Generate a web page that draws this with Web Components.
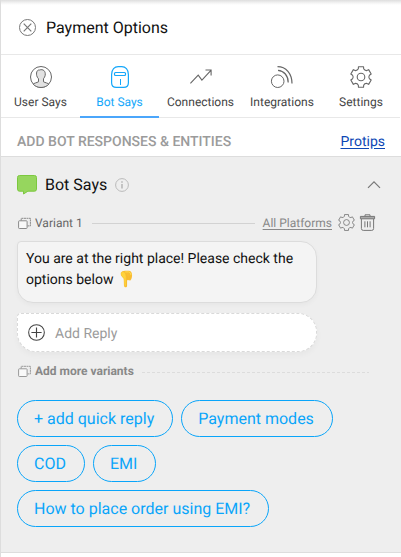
<!DOCTYPE html>
<html lang="en">
<head>
<meta charset="utf-8">
<title>Payment Options</title>
<style>
html,body{margin:0;height:100%;background:#fff}
body{font-family:Roboto,"Liberation Sans",sans-serif;overflow:hidden;text-rendering:geometricPrecision}
</style>
</head>
<body>
<bot-editor></bot-editor>
<script>
// Six-toothed gear outline centred in a 22-unit box.
const gear = () => {
  const at = (deg, r) => { const a = deg * Math.PI / 180; return (11 + r * Math.cos(a)).toFixed(2) + ' ' + (11 + r * Math.sin(a)).toFixed(2); };
  let d = '';
  for (let k = 0; k < 6; k++) {
    const m = -90 + 60 * k;
    d += (k ? 'L' : 'M') + at(m - 14, 10.6) + 'L' + at(m + 14, 10.6) + 'L' + at(m + 18, 8.6) + 'Q' + at(m + 30, 7.2) + ' ' + at(m + 42, 8.6);
  }
  return d + 'z';
};
const icons = {
  close: [17, '<circle cx="8.5" cy="8.5" r="8"/><path d="M4.7 4.7l7.6 7.6M12.3 4.7l-7.6 7.6" stroke-width="1.2"/>'],
  user: [22, '<circle cx="11" cy="11" r="10.5"/><path fill="#e2e2e2" d="M3.2 18.2c.6-1 3.6-1.5 5.3-2.4v-3c-1-1-1.5-2-1.8-3.3C6 5.800 7.500 3.600 9.600 4c3.300-1.200 6.200.8 5.600 5.300-.3 1.300-.8 2.500-1.700 3.400v3.100c1.700.9 4.700 1.400 5.300 2.400-3.900 4.300-11.600 4.400-15.600 0z"/>'],
  bot: [22, '<path d="M2.600 8.500C2.600 3.500 5.600.6 9.200.6h3.600c3.600 0 6.600 2.900 6.600 7.900v8.200c0 3-1.600 4.700-4.700 4.700H7.300c-3.100 0-4.700-1.700-4.700-4.700z" stroke-width="1.200"/><rect x="5.500" y="6.500" width="11" height="3" rx="1" stroke-width="1.200"/><path d="M11.500 13v6"/>'],
  connections: [22, '<path d="M.4 17.300l7.800-8.200 3.700 5L20.700 4.600M15.500 4h5.600v5.600" stroke-width="1.100"/>'],
  integrations: [22, '<circle cx="6.700" cy="15.200" r="6.300"/><path d="M6.500.6C15 .6 21 7.500 21 17.500M7 4.300C13 4.700 17.200 9.700 17.200 16.500" stroke-width="1.200"/>'],
  settings: [22, `<path d="${gear()}" stroke-linejoin="round" stroke-width="1.100"/><circle cx="11" cy="11" r="3.800" stroke-width="1.100"/>`],
  chat: [20, '<path d="M2.500.5h15a2 2 0 0 1 2 2v11.700a2 2 0 0 1-2 2h-6.600L6.500 19v-2.800h-4a2 2 0 0 1-2-2V2.500a2 2 0 0 1 2-2z" fill="#96d65e" stroke="#7cc83f"/>'],
  info: [14, '<circle cx="7" cy="7" r="6.400"/><path d="M7 6v4.600M7 3.200v1.500" stroke-width="1.700"/>'],
  up: [14, '<path d="M1 9.800l6-6 6 6" stroke-width="1.200"/>'],
  copy: [13, '<rect x=".6" y="3.800" width="8.500" height="7.700" rx=".7" fill="#f9f9f9"/><path d="M3.200 3.500V1.300h9.200v7.600H9.500" stroke-dasharray="2 .5"/>'],
  trash: [17, '<path fill="#aaa" d="M1.400 2.400h14.200v2.400H1.400z"/><path d="M6 2.200V.8h5v1.400M2.400 5v9.500q0 1.900 1.900 1.900h8.400q1.900 0 1.900-1.900V5"/><path d="M5.900 7.300v6M8.500 7.300v6M11.100 7.300v6"/>'],
  plus: [18, '<circle cx="9" cy="9" r="8.300" stroke-width="1.100"/><path d="M9 3.600v10.800M3.600 9h10.800" stroke-width="1.200"/>'],
  hand: [18, '<path stroke="none" fill="#f9bd33" d="M3.500 3.200C4 1.400 5.500.7 7.500.7h3.700c2.600 0 3.700 2.100 3.700 4.700 0 2.200-.5 4.800-1.600 5.400-.8.400-1.500.2-1.800-.3-.4.6-1.300.6-1.900.1v6.100c0 2.200-3 2.200-3.100 0L6.300 9 4.300 6.800c-.8-.9-1.200-2-.8-3.600z"/><path fill="#ffd33d" stroke="#f5b52e" stroke-width=".4" d="M3.300 2.700c.9-1 2.600-1.100 3.600-.3 1 1 1.700 3.500 1.700 5v8.700c0 1.600-1.800 1.600-1.900 0L6.200 9.200 4 6.400C3.200 5.300 2.900 3.700 3.300 2.700zM10.200 6.700v3.200M12.600 6.300v3.600"/><path stroke="#ffdc52" stroke-width="1" d="M7.600 2h3.800q2 .5 2.300 3.300"/>']
};
const define = (name, html, setup) => customElements.define(name, class extends HTMLElement {
  constructor() {
    super();
    const t = document.createElement('template');
    t.innerHTML = html;
    this.attachShadow({mode:'open'}).append(t.content.cloneNode(true));
  }
  connectedCallback() { if (setup) setup(this); }
});

define('ui-icon', '<style>:host{display:block;flex:none;color:#666}svg{display:block;overflow:visible}</style><div></div>', el => {
  const icon = icons[el.getAttribute('name')];
  if (!icon) return;
  const [box, art] = icon;
  const size = el.getAttribute('size') || box;
  el.shadowRoot.querySelector('div').innerHTML = `<svg width="${size}" height="${size}" viewBox="0 0 ${box} ${box}" fill="none" stroke="currentColor">${art}</svg>`;
});

define('nav-tab', `<style>
:host{display:flex;box-sizing:border-box;height:63px;flex-direction:column;align-items:center;padding-top:11px;font-size:12px;line-height:14px;color:#444;border-bottom:1px solid #e8e8e8;white-space:nowrap}
span{margin-top:7px}
ui-icon{color:#666}
:host([active]){color:#15a7fa;border-bottom:2px solid #4ba6fb}
:host([active]) ui-icon{color:#15a7fa}
</style><div></div><span><slot></slot></span>`, el => {
  el.shadowRoot.querySelector('div').innerHTML = `<ui-icon name="${el.getAttribute('icon')}"></ui-icon>`;
});

define('panel-header', `<style>
:host{display:flex;box-sizing:border-box;height:55px;align-items:center;padding-left:18px;gap:10px;font-size:16px;color:#111;border-bottom:1px solid #e8e8e8;background:linear-gradient(#dedede,#f4f4f4 3px,#fff 5px)}
ui-icon{color:#777}
</style><ui-icon name="close"></ui-icon><slot></slot>`);

define('section-bar', `<style>
:host{display:flex;box-sizing:border-box;height:39px;align-items:center;justify-content:space-between;padding:9px 16px 0 16px;border-bottom:1px solid #ddd;font-size:14px;font-weight:500;color:#9b9b9b}
a{color:#0d47b5;font-weight:400;text-decoration:underline;text-underline-offset:2px}
</style><span><slot></slot></span><a>Protips</a>`);

define('variant-row', `<style>
:host{display:flex;align-items:center;height:20px;font-size:12px;color:#666}
ui-icon[name=copy]{color:#8a8a8a;margin:0 4px 0 1px}
i{flex:1;border-top:1px solid #d2d2d2;margin:1px 8px 0 9px}
a{color:#888;text-decoration:underline;text-underline-offset:2px;margin-right:6px}
ui-icon{color:#777}
ui-icon[name=settings],ui-icon[name=trash]{margin-bottom:1px}
ui-icon[name=trash]{margin-left:4px}
</style><ui-icon name="copy"></ui-icon><slot></slot><i></i><a>All Platforms</a><ui-icon name="settings" size="17"></ui-icon><ui-icon name="trash"></ui-icon>`);

define('more-variants', `<style>
:host{display:flex;align-items:center;height:16px;font-size:12px;font-weight:700;color:#888}
ui-icon{color:#999;margin:0 4px 0 1px}
i{flex:1;height:1px;margin:2px 0 0 8px;background:repeating-linear-gradient(90deg,#dcdcdc 0 3px,transparent 3px 5px)}
</style><ui-icon name="copy"></ui-icon><slot></slot><i></i>`);

define('reply-bubble', `<style>
:host{display:block;box-sizing:border-box;width:300px;height:62px;padding:7px 8px 5px;border:1px solid #dcdcdc;border-radius:4px 16px 16px 16px;background:#f4f4f4;box-shadow:0 2px 5px rgba(0,0,0,.035);font-size:14px;line-height:21px;color:#111}
</style><slot></slot>`);

define('reply-input', `<style>
:host{display:flex;box-sizing:border-box;width:300px;height:39px;align-items:center;padding-left:10px;gap:10px;border:1px dashed #d9d9d9;border-radius:4px 19px 19px 19px;background:#fff;box-shadow:0 3px 6px rgba(0,0,0,.035);font-size:14px;color:#9b9b9b}
ui-icon{color:#444}
span{padding-top:2px}
</style><ui-icon name="plus" size="17"></ui-icon><span><slot></slot></span>`);

define('quick-reply', `<style>
:host{display:flex;box-sizing:border-box;height:37px;align-items:center;padding:0 18px 0 16px;border:1px solid #09a5fa;border-radius:19px;font-size:16px;color:#09a5fa;white-space:nowrap}
</style><span><slot></slot></span>`);

define('bot-editor', `<style>
:host{display:block;box-sizing:border-box;width:401px;height:557px;border-left:1px solid #ddd;background:#fff}
nav{display:grid;grid-template-columns:79px 79px 83px 80px 78px;border-right:1px solid #fff}
main{display:flex;flex-direction:column;box-sizing:border-box;height:396px;padding:17px 16px 0;background:#eee;border-bottom:1px solid #ddd}
h2{display:flex;align-items:center;height:21px;margin:0 4px 0 0;font-size:16px;font-weight:400;color:#111}
h2 span{margin:0 8px 0 8px}
h2 ui-icon[name=info]{color:#bbb}
h2 ui-icon[name=up]{margin-left:auto;color:#777}
variant-row{margin:18px 9px 8px 0}
reply-input{margin:10px 0 11px}
more-variants{margin-right:16px}
reply-bubble ui-icon{display:inline-block;vertical-align:-3px;margin-left:1px}
section{display:flex;flex-wrap:wrap;gap:8px;margin-top:21px}
</style>
<panel-header>Payment Options</panel-header>
<nav><nav-tab icon="user">User Says</nav-tab><nav-tab icon="bot" active>Bot Says</nav-tab><nav-tab icon="connections">Connections</nav-tab><nav-tab icon="integrations">Integrations</nav-tab><nav-tab icon="settings">Settings</nav-tab></nav>
<section-bar>ADD BOT RESPONSES &amp; ENTITIES</section-bar>
<main>
<h2><ui-icon name="chat"></ui-icon><span>Bot Says</span><ui-icon name="info"></ui-icon><ui-icon name="up"></ui-icon></h2>
<variant-row>Variant 1</variant-row>
<reply-bubble>You are at the right place! Please check the options below <ui-icon name="hand" size="17"></ui-icon></reply-bubble>
<reply-input>Add Reply</reply-input>
<more-variants>Add more variants</more-variants>
<section><quick-reply>+ add quick reply</quick-reply><quick-reply>Payment modes</quick-reply><quick-reply>COD</quick-reply><quick-reply>EMI</quick-reply><quick-reply>How to place order using EMI?</quick-reply></section>
</main>`);
</script>
</body>
</html>
